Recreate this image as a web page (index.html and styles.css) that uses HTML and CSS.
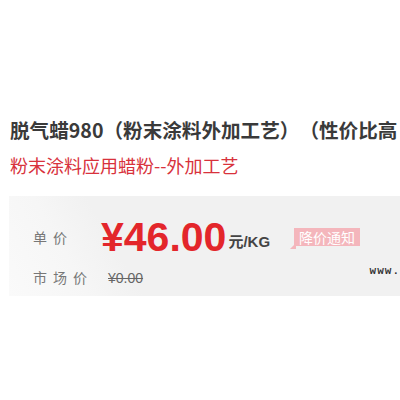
FILE: index.html
```html
<!DOCTYPE html>
<html lang="zh-CN">
<head>
  <meta charset="UTF-8" />
  <title>脱气蜡980</title>
  <link rel="stylesheet" href="styles.css">
</head>
<body>
  <div class="product">
    <h1 class="title">脱气蜡980（粉末涂料外加工艺）（性价比高</h1>
    <p class="subtitle">粉末涂料应用蜡粉--外加工艺</p>
    <div class="price-box">
      <div class="row row-price">
        <span class="label">单价</span>
        <span class="price">¥46.00</span>
        <span class="unit">元/KG</span>
        <span class="notify">降价通知</span>
      </div>
      <div class="row row-market">
        <span class="label">市场价</span>
        <span class="old-price">¥0.00</span>
        <span class="site">www.</span>
      </div>
    </div>
  </div>
</body>
</html>
```

FILE: styles.css
```css
* {
  margin: 0;
  padding: 0;
  box-sizing: border-box;
}
body {
  background: #ffffff;
  font-family: "Noto Sans CJK SC", "Liberation Sans", sans-serif;
  overflow: hidden;
  width: 400px;
  height: 400px;
}
.product {
  padding-top: 117px;
  width: 400px;
}
.title {
  font-size: 19.6px;
  font-weight: 700;
  color: #3a3a3a;
  white-space: nowrap;
  padding-left: 10px;
  line-height: 26px;
  text-spacing-trim: space-all;
}
.subtitle {
  font-size: 18px;
  color: #d8323c;
  padding-left: 10px;
  margin-top: 10px;
  line-height: 24px;
}
.price-box {
  margin-top: 19px;
  margin-left: 9px;
  height: 100px;
  padding: 21px 0 0 24px;
  background: linear-gradient(60deg, #fafafa 0%, #f6f6f6 18%, #f1f1f1 30%, #f1f1f1 100%);
}
.row {
  display: flex;
  align-items: baseline;
}
.label {
  width: 68px;
  font-size: 14px;
  line-height: 20px;
  letter-spacing: 6px;
  color: #777;
}
.row-price .label,
.row-price .notify {
  align-self: center;
}
.price {
  font-family: "Liberation Sans", Arial, sans-serif;
  font-weight: 700;
  font-size: 41px;
  line-height: 40px;
  color: #e3262b;
}
.unit {
  font-family: "Liberation Sans", "Noto Sans CJK SC", sans-serif;
  font-weight: 700;
  font-size: 15px;
  color: #444;
  margin-left: 2px;
  position: relative;
  top: -4px;
}
.notify {
  position: relative;
  margin-left: 24px;
  background: #f4b6bc;
  color: #fff;
  font-size: 14px;
  line-height: 18px;
  padding: 0 5px;
}
.notify::before {
  content: "";
  position: absolute;
  left: -4px;
  bottom: -3px;
  border-top: 6px solid transparent;
  border-right: 6px solid #f4b6bc;
}
.row-market {
  margin-top: 10px;
}
.old-price {
  font-family: "Liberation Sans", Arial, sans-serif;
  font-size: 14px;
  color: #666;
  text-decoration: line-through;
  padding-left: 7px;
}
.site {
  margin-left: auto;
  margin-right: 0;
  align-self: flex-start;
  margin-top: -2px;
  font-family: "Liberation Mono", monospace;
  font-weight: 700;
  font-size: 11px;
  line-height: 12px;
  letter-spacing: 1px;
  color: #333;
}
```
